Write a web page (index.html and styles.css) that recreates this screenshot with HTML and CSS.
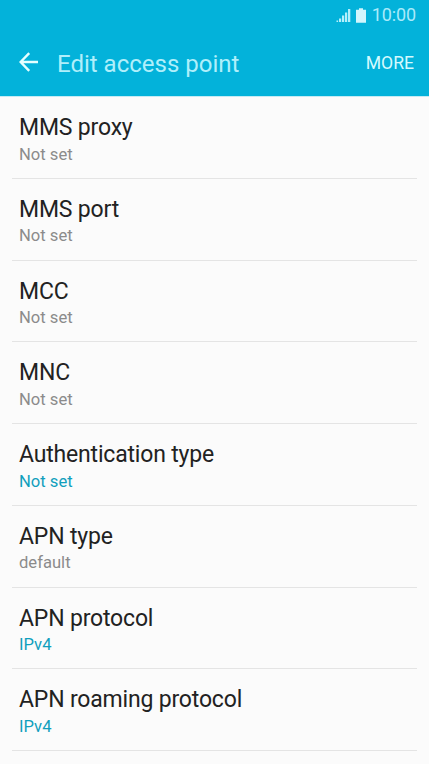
FILE: index.html
```html
<!DOCTYPE html>
<html lang="en">
<head>
<meta charset="utf-8">
<title>Edit access point</title>
<link rel="stylesheet" href="styles.css">
</head>
<body>
<header class="header">
  <div class="status">
    <svg class="signal" width="15" height="15" viewBox="0 0 15 15"><path d="M0.500 12.500h1.600v1.500h-1.600zM3 10.500h2.200v3.500h-2.200zM6 7.500h2.200v6.500h-2.200zM9 4.500h2.200v9.500h-2.200zM12 1h2.300v13h-2.300z"/></svg>
    <svg class="battery" width="10" height="15" viewBox="0 0 10 15"><path d="M3 0.300h4v1.500h3v13H0V1.800h3z"/></svg>
    <span class="clock">10:00</span>
  </div>
  <div class="toolbar">
    <svg class="back" width="20" height="20" viewBox="0 0 20 20"><path d="M10.200 1.200 1.600 10l8.600 8.800M1.800 10H19"/></svg>
    <h1 class="title">Edit access point</h1>
    <span class="more">MORE</span>
  </div>
</header>
<main class="list">
  <div class="row"><div class="name">MMS proxy</div><div class="value">Not set</div></div>
  <div class="row"><div class="name">MMS port</div><div class="value">Not set</div></div>
  <div class="row"><div class="name">MCC</div><div class="value">Not set</div></div>
  <div class="row"><div class="name">MNC</div><div class="value">Not set</div></div>
  <div class="row"><div class="name">Authentication type</div><div class="value accent">Not set</div></div>
  <div class="row"><div class="name">APN type</div><div class="value">default</div></div>
  <div class="row"><div class="name">APN protocol</div><div class="value accent">IPv4</div></div>
  <div class="row"><div class="name">APN roaming protocol</div><div class="value accent">IPv4</div></div>
</main>
</body>
</html>
```
FILE: styles.css
```css
* { box-sizing: border-box; }
body {
  margin: 0;
  height: 764px;
  overflow: hidden;
  background: #fbfbfb;
  font-family: Roboto, sans-serif;
}
.header {
  height: 97px;
  background: #03b2da;
  border-bottom: 1px solid #c5ebf4;
}
.status {
  display: flex;
  align-items: center;
  justify-content: flex-end;
  height: 30px;
  padding-right: 13px;
  color: #a9eafa;
}
.signal { fill: #b4effb; margin-right: 5px; }
.battery { fill: #d2f6fd; margin-right: 6px; }
.clock { font-size: 18px; line-height: 30px; letter-spacing: -0.1px; }
.toolbar {
  display: flex;
  align-items: center;
  height: 66px;
  padding: 0 15px 0 19px;
}
.back {
  fill: none;
  stroke: #e4ffff;
  stroke-width: 2.4;
  margin: 0 18px 2px 0;
}
.title {
  flex: 1;
  margin: 2px 0 0;
  font-size: 24px;
  font-weight: 400;
  line-height: 30px;
  color: #b0effb;
}
.more { font-size: 17.600px; color: #d5fafe; }
.list { padding: 0 12px; }
.row {
  height: 81.750px;
  padding: 16.100px 7px 0;
  border-bottom: 1px solid #e4e4e4;
}
.name { font-size: 23px; line-height: 30px; letter-spacing: -0.18px; color: #222; }
.value { font-size: 16.600px; line-height: 22px; padding-top: 0.500px; color: #8b8b8b; }
.accent { color: #119fbd; }
```
